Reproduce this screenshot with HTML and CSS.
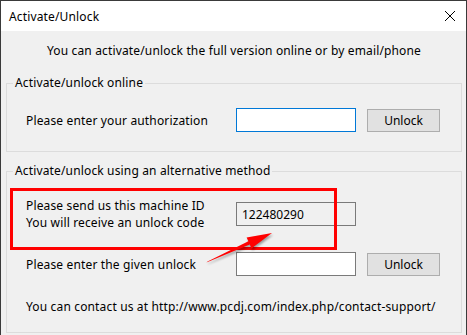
FILE: index.html
```html
<!DOCTYPE html>
<html lang="en">
<head>
    <meta charset="UTF-8">
    <meta name="viewport" content="width=device-width, initial-scale=1.0">
    <title>Activate/Unlock</title>
    <link rel="stylesheet" href="styles.css">
</head>
<body>
    <div class="window">
        <div class="titlebar">
            <span class="title">Activate/Unlock</span>
            <svg class="close" width="12" height="12" viewBox="0 0 12 12">
                <path d="M1 1 L11 11 M11 1 L1 11" stroke="#000" stroke-width="1" fill="none"/>
            </svg>
        </div>

        <div class="content">
            <p class="intro">You can activate/unlock the full version online or by email/phone</p>

            <fieldset class="group">
                <legend>Activate/unlock online</legend>
                <div class="row">
                    <label for="auth">Please enter your authorization</label>
                    <input type="text" id="auth" class="field focused">
                    <button class="button">Unlock</button>
                </div>
            </fieldset>

            <fieldset class="group second">
                <legend>Activate/unlock using an alternative method</legend>
                <div class="row">
                    <label for="machine">Please send us this machine ID<br>You will receive an unlock code</label>
                    <input type="text" id="machine" class="field readonly" value="122480290" readonly>
                </div>
                <div class="row next">
                    <label for="code">Please enter the given unlock</label>
                    <input type="text" id="code" class="field">
                    <button class="button">Unlock</button>
                </div>
                <p class="contact">You can contact us at http://www.pcdj.com/index.php/contact-support/</p>
            </fieldset>
        </div>

        <!-- annotation drawn over the dialog -->
        <div class="highlight"></div>
        <svg class="arrow" width="467" height="335" viewBox="0 0 467 335">
            <polygon points="206.4,262.6 207.6,261.4 248.4,241.2 246.6,237.4 272,233 251.4,248.4 249.8,244.6" fill="#ff0000"/>
        </svg>
    </div>
</body>
</html>
```

FILE: styles.css
```css
html, body {
    margin: 0;
    padding: 0;
}

body {
    font-family: "Noto Sans", "DejaVu Sans", sans-serif;
    font-size: 12px;
    letter-spacing: 0.15px;
    color: #000;
    background: #f0f0f0;
}

.window {
    position: relative;
    width: 465px;
    height: 334px;
    border: 1px solid #3a3a3a;
    border-bottom: none;
    background: #f0f0f0;
    overflow: hidden;
}

.titlebar {
    height: 30px;
    background: #fff;
    display: flex;
    align-items: center;
    justify-content: space-between;
    padding: 0 9px 0 8px;
}

.title {
    line-height: 16px;
    margin-top: 1px;
}

.close {
    margin-right: 1px;
    margin-top: -1px;
}

.content {
    padding: 0 4px 0 5px;
}

.intro {
    margin: 0;
    padding-top: 11px;
    line-height: 17px;
    text-align: center;
    margin-bottom: 16px;
}

.group {
    margin: 0;
    padding: 17px 0 19px 6px;
    border: 1px solid #dcdcdc;
}

.group legend {
    padding: 0 2px;
    line-height: 16px;
}

.second {
    margin-top: 11px;
    padding-top: 18px;
    padding-bottom: 17px;
}

.row {
    display: grid;
    grid-template-columns: 210px 120px 84px;
    align-items: center;
    padding-left: 13px;
    line-height: 17px;
}

.next {
    margin-top: 21px;
}

.field {
    box-sizing: border-box;
    width: 120px;
    height: 24px;
    margin: 0;
    padding: 0 5px;
    border: 1px solid #7a7a7a;
    background: #fff;
    font: inherit;
    outline: none;
}

.focused {
    border-color: #0078d7;
}

.readonly {
    background: #f0f0f0;
}

.button {
    box-sizing: border-box;
    width: 73px;
    height: 23px;
    margin: 0 0 0 11px;
    padding: 0;
    border: 1px solid #adadad;
    background: #e1e1e1;
    font: inherit;
    color: #000;
}

.contact {
    margin: 22px 0 0;
    padding-left: 13px;
    line-height: 17px;
}

.highlight {
    position: absolute;
    left: 9px;
    top: 187px;
    width: 321px;
    height: 56px;
    border: 3px solid #ff0000;
}

.arrow {
    position: absolute;
    left: -1px;
    top: -1px;
    filter: drop-shadow(1px 2px 1px rgba(0, 0, 0, 0.35));
}
```
